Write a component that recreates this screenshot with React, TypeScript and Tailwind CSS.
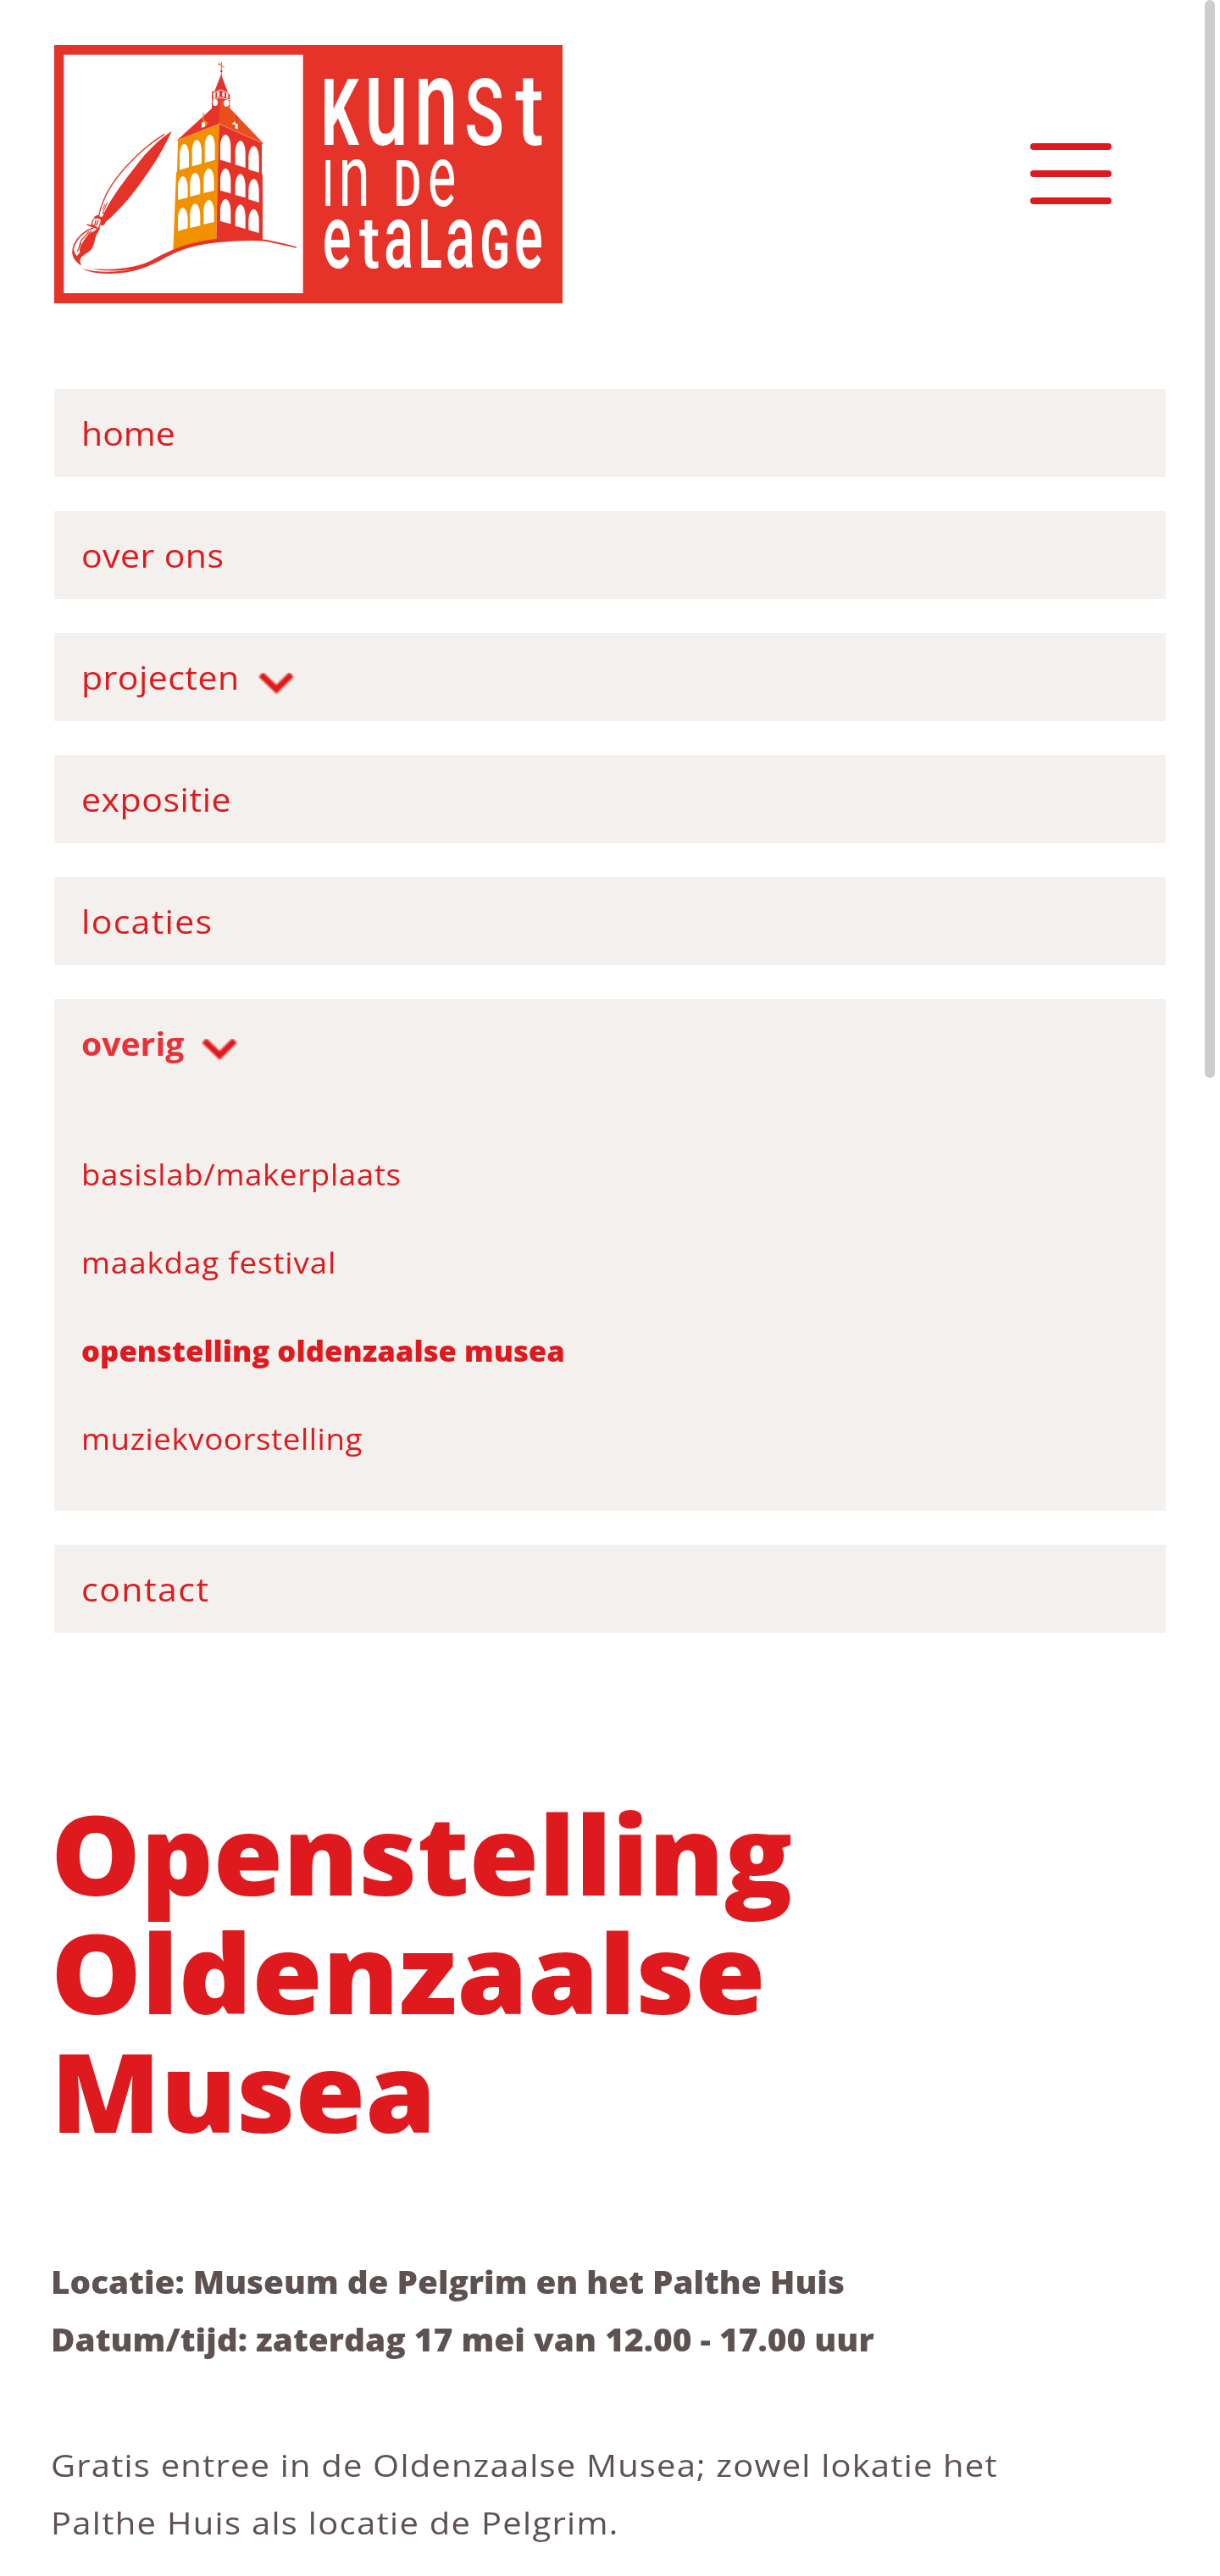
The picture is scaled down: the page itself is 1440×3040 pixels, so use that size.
type Arch = [x0: number, x1: number, top: number, bottomLeft: number, bottomRight: number];

// Arched tower windows, left face first, then right face.
const WINDOWS: Arch[] = [
  [486, 519, 389, 482, 472], [530, 564, 375, 469, 460], [575, 611, 356, 456, 446],
  [480, 515, 504, 588, 579], [523, 559, 491, 576, 567], [571, 608, 476, 563, 555],
  [480, 515, 615, 698, 688], [523, 559, 601, 687, 679], [571, 608, 587, 674, 666],
  [630, 667, 356, 446, 457], [683, 719, 378, 463, 474], [730, 767, 397, 480, 491],
  [630, 667, 476, 554, 565], [683, 719, 496, 570, 580], [730, 767, 513, 586, 597],
  [630, 667, 584, 663, 673], [683, 719, 604, 680, 690], [730, 767, 620, 694, 705],
];

function archPath([x0, x1, top, bl, br]: Arch) {
  const mid = (x0 + x1) / 2;
  return `M${x0} ${bl}V${top + 42}C${x0} ${top + 18} ${mid - 9} ${top + 2} ${mid} ${top}C${mid + 10} ${top + 2} ${x1} ${top + 18} ${x1} ${top + 42}V${br}Z`;
}

type Letter = [char: string, x: number, size: number, length: number, weight: number];

const WORDMARK: { y: number; letters: Letter[] }[] = [
  {
    y: 171.3,
    letters: [["K", 378.8, 110, 44.9, 700], ["u", 430.2, 148, 51.6, 500], ["n", 488.9, 146, 51.6, 500], ["S", 548.3, 110, 46.7, 500], ["t", 608.3, 119, 33.7, 500]],
  },
  {
    y: 242.7,
    letters: [["I", 378.9, 76.5, 16.3, 400], ["n", 399.6, 102, 37.2, 400], ["D", 464.5, 76.5, 32.9, 500], ["e", 504.9, 102, 33.3, 400]],
  },
  {
    y: 316,
    letters: [["e", 380.8, 106, 33.8, 500], ["t", 424, 86, 24.4, 500], ["a", 453.1, 106, 35.1, 500], ["L", 493.9, 79.3, 27.6, 700], ["a", 525.7, 106, 35.1, 500], ["G", 566.7, 79, 34.9, 700], ["e", 607.1, 106, 33.8, 500]],
  },
];

function Logo() {
  return (
    <svg viewBox="64 53 600 305" className="h-[305px] w-[600px]" role="img" aria-label="Kunst in de Etalage">
      <rect x="64" y="53" width="600" height="305" fill="#e63329" />
      <g transform="translate(50 40) scale(0.33333)">
        <rect x="76" y="74" width="847" height="844" fill="#fff" />

        {/* brush handle */}
        <path d="M432 355C350 405 245 510 215 595Q204 620 200 645" fill="none" stroke="#e63329" strokeWidth="4" />
        <path d="M458 344C420 368 365 420 335 463C295 515 245 575 210 652L214 676Q220 680 223 667C290 612 345 535 385 475C415 430 440 385 458 344Z" fill="#e63329" />
        <path d="M230 597L213 635L226 630M222 603L213 622" fill="none" stroke="#e63329" strokeWidth="3" />
        {/* ferrule */}
        <path d="M182 652Q186 642 197 641Q203 650 217 648L222 668L215 678L206 678Q211 662 205 657Q194 651 182 655Z" fill="#e63329" />
        <path d="M182 656Q174 668 176 676M209 660L199 690M190 658L185 678M198 661L191 679" fill="none" stroke="#e63329" strokeWidth="4" />
        <path d="M158 675Q178 684 204 690M172 675L192 685" fill="none" stroke="#e63329" strokeWidth="5" />
        {/* bristles */}
        <path d="M180 687C130 705 107 745 108 775C110 795 125 808 136 817" fill="none" stroke="#e63329" strokeWidth="5" />
        <path d="M201 688Q203 694 196 704C184 720 188 738 176 760C165 778 136 783 134 800Q132 812 138 818C120 808 107 795 108 774L112 765Q115 780 123 786Q127 778 133 775C127 758 145 735 158 718Q175 699 184 698Q192 688 201 688Z" fill="#e63329" />
        <path d="M165 700L137 732L130 755M173 698L145 738M137 740L124 770" fill="none" stroke="#e63329" strokeWidth="4" />

        {/* tower */}
        <path d="M480 376L626 319L621 480L616 728L463 768L474 490H477Z" fill="#f29100" />
        <path d="M626 319L782 388L777 391V497H780V731L616 733L621 480Z" fill="#e63329" />
        <path d="M476 377L600 264V203L609 205L633 143L657 207L664 215V262L633 240L626 319Z" fill="#e63329" />
        <path d="M629 228L663 262L783 388L626 319Z" fill="#ea4f1e" />
        <path d="M476 377L626 319L783 388" fill="none" stroke="#f0a070" strokeWidth="1.5" />
        <path d="M634 99V150M622 106L645 119M627 102L625 111" fill="none" stroke="#e63329" strokeWidth="2.5" />
        <circle cx="634" cy="132" r="4" fill="#e63329" />
        <path d="M602 212L632 198L664 213M602 231L630 225L663 233" fill="none" stroke="#fff" strokeWidth="3" />
        <path d="M605 213L613 208V224L605 227ZM618 206L627 205V221L618 223ZM637 206L645 208V223L637 221ZM651 210L658 214V228L651 225Z" fill="#fff" />
        <ellipse cx="612" cy="243" rx="9.5" ry="12" fill="#fff" />
        <ellipse cx="652" cy="245" rx="10" ry="12" fill="#fff" />
        <path d="M570 280V312" stroke="#f29100" strokeWidth="4" />
        <path d="M573 305L587 315L576 330Z" fill="#f29100" />
        <path d="M564 316L570 310L576 316V328L564 333Z" fill="#fff" />
        <path d="M687 288V315" stroke="#e63329" strokeWidth="4" />
        <path d="M670 318L684 309L683 317L692 319V338L683 334V322Z" fill="#fff" />
        <path d={WINDOWS.map(archPath).join("")} fill="#fff" />

        {/* ground line */}
        <path d="M175 832C270 838 345 825 395 797C465 758 530 735 616 726C690 722 745 728 790 728Q845 738 900 754V758Q840 744 790 734C740 730 690 733 625 738C540 745 480 768 440 790C375 828 310 850 240 849Q165 847 139 830Q150 835 180 839C230 845 280 842 318 832C270 842 215 840 175 832Z" fill="#e63329" />
      </g>
      {WORDMARK.map((line) => (
        <text key={line.y} y={line.y} fill="#fff" fontFamily="Roboto, sans-serif">
          {line.letters.map(([char, x, size, length, weight]) => (
            <tspan key={x} x={x} fontSize={size} fontWeight={weight} textLength={length} lengthAdjust="spacingAndGlyphs">
              {char}
            </tspan>
          ))}
        </text>
      ))}
    </svg>
  );
}

function Chevron() {
  return (
    <svg viewBox="0 0 43 28" className="mt-[18px] h-7 w-[43px] overflow-hidden" aria-hidden="true">
      <path d="M3 2L21.3 19.5L39 2" fill="none" stroke="#e0181c" strokeWidth="7.4" className="blur-[1.3px]" />
    </svg>
  );
}

const ITEM = "flex h-[104px] items-center bg-[#f4f0ed] px-8 text-[38px] leading-[104px]";
const WIDE = "block origin-left scale-x-[1.08]";

export default function App() {
  return (
    <div className="relative h-[3040px] w-[1440px] overflow-hidden bg-white font-['Open_Sans',sans-serif] text-[#de1a1e]">
      <header className="flex items-start justify-between pt-[53px] pr-32 pl-16">
        <Logo />
        <button type="button" aria-label="Menu" className="mt-[116px] flex w-24 flex-col gap-6">
          <span className="h-2 rounded-full bg-[#de1a1e]" />
          <span className="h-2 rounded-full bg-[#de1a1e]" />
          <span className="h-2 rounded-full bg-[#de1a1e]" />
        </button>
      </header>

      <nav className="mt-[101px] flex flex-col gap-10 px-16 whitespace-nowrap">
        <a className={ITEM}><span className={WIDE}>home</span></a>
        <a className={ITEM}><span className={`${WIDE} tracking-[0.38px]`}>over ons</span></a>
        <a className={ITEM}><span className={`${WIDE} mr-9 tracking-[0.42px]`}>projecten</span><Chevron /></a>
        <a className={ITEM}><span className={`${WIDE} tracking-[0.5px]`}>expositie</span></a>
        <a className={ITEM}><span className={`${WIDE} tracking-[1.2px]`}>locaties</span></a>
        <div className="h-[604px] bg-[#f4f0ed]">
          <a className={`${ITEM} font-bold text-[#e83237]`}>
            <span className="mr-6 block origin-left scale-x-[1.03]">overig</span>
            <Chevron />
          </a>
          <div className="mt-[51px] flex flex-col items-start px-8 text-[34px] leading-[104px]">
            <a className={`${WIDE} tracking-[0.58px]`}>basislab/makerplaats</a>
            <a className={`${WIDE} tracking-[0.8px]`}>maakdag festival</a>
            <a className="block origin-left scale-x-[1.02] font-extrabold">openstelling oldenzaalse musea</a>
            <a className={`${WIDE} tracking-[0.52px]`}>muziekvoorstelling</a>
          </div>
        </div>
        <a className={ITEM}><span className={`${WIDE} tracking-[1.37px]`}>contact</span></a>
      </nav>

      <main className="mt-[190px] px-[60px] whitespace-nowrap">
        <h1 className="text-[130px] leading-[140px] font-extrabold">
          <span className="block origin-left scale-x-[1.025]">Openstelling</span>
          <span className="block origin-left scale-x-[1.036]">Oldenzaalse</span>
          <span className="block origin-left scale-x-[1.03]">Musea</span>
        </h1>
        <div className="mt-[122px] text-[37px] leading-[68px] text-[#5e5151]">
          <p className="font-extrabold">
            <span className="block origin-left scale-x-[1.046]">Locatie: Museum de Pelgrim en het Palthe Huis</span>
            <span className="block origin-left scale-x-[1.05]">Datum/tijd: zaterdag 17 mei van 12.00 - 17.00 uur</span>
          </p>
          <p className="mt-20">
            <span className={`${WIDE} tracking-[1.1px]`}>Gratis entree in de Oldenzaalse Musea; zowel lokatie het</span>
            <span className={`${WIDE} tracking-[1.2px]`}>Palthe Huis als locatie de Pelgrim.</span>
          </p>
        </div>
      </main>

      <div className="absolute top-0 left-[1422px] h-[1272px] w-3 rounded-full bg-[#cdcdcd]" />
    </div>
  );
}
